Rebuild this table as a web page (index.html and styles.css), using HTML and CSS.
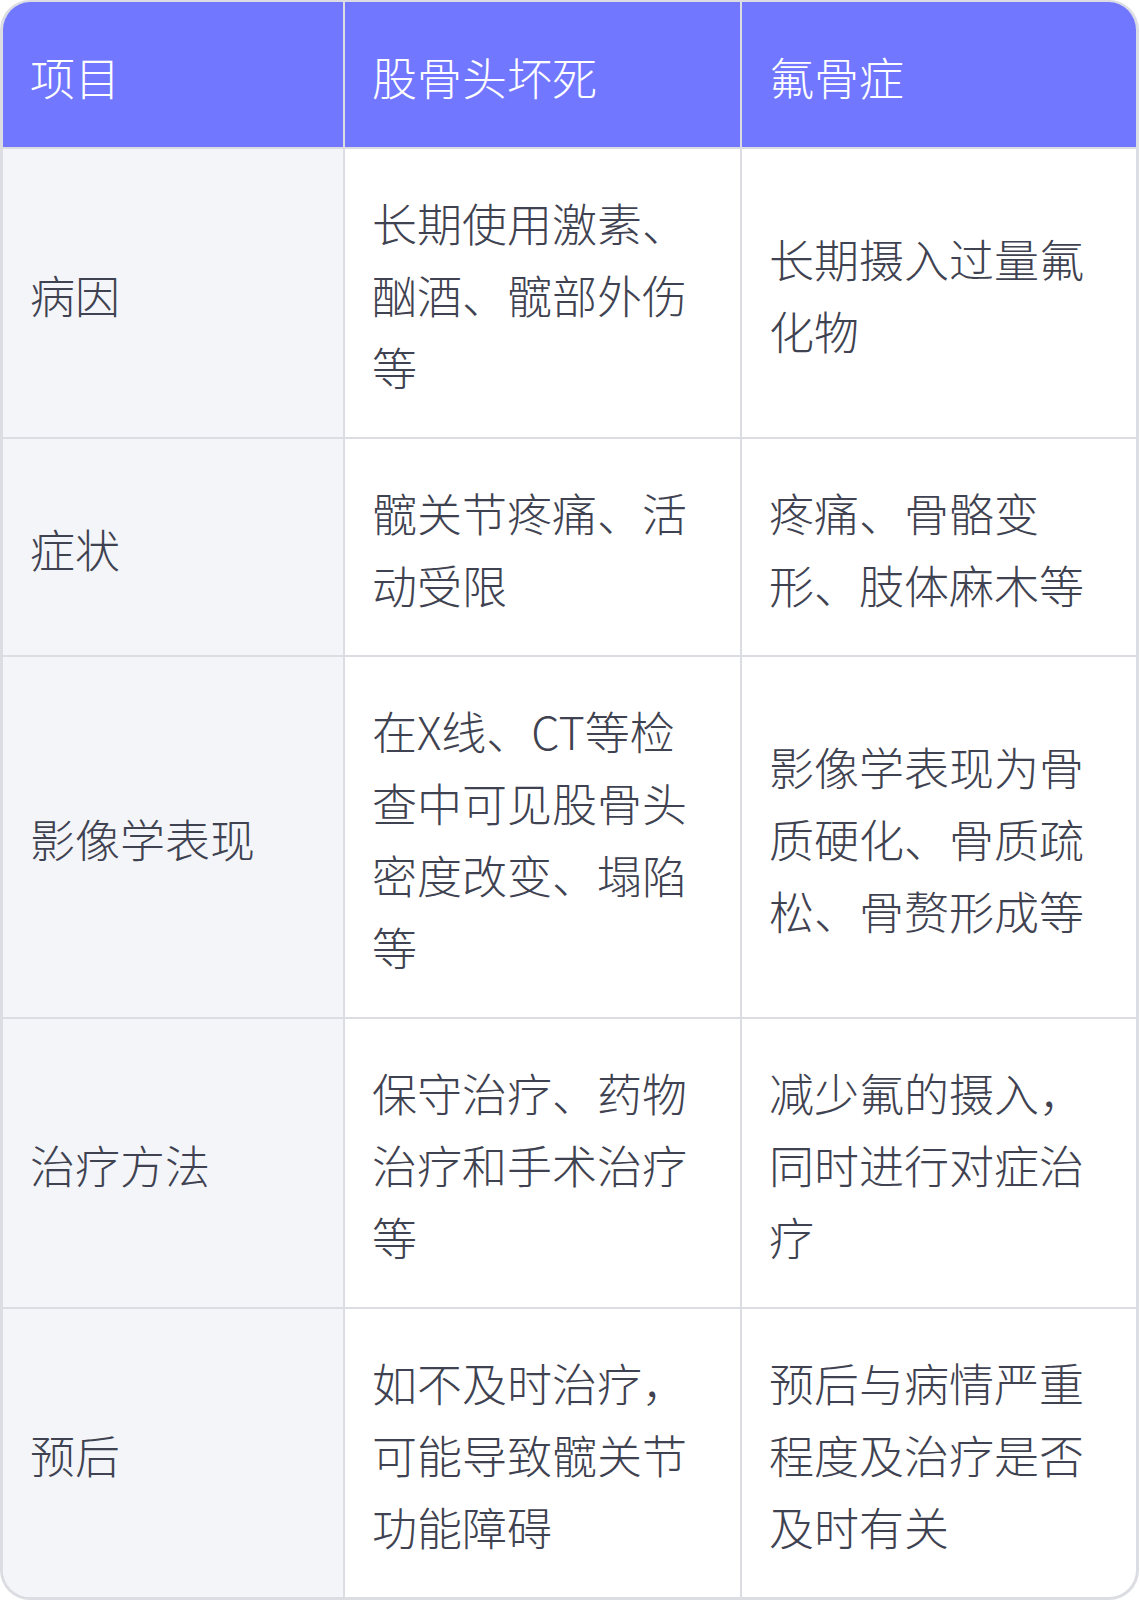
FILE: index.html
```html
<!DOCTYPE html>
<html lang="zh">
<head>
<meta charset="utf-8">
<link rel="stylesheet" href="styles.css">
</head>
<body>
<div class="card">
<table class="cmp">
<colgroup><col class="c1"><col class="c2"><col class="c3"></colgroup>
<thead>
<tr><th>项目</th><th>股骨头坏死</th><th>氟骨症</th></tr>
</thead>
<tbody>
<tr><td>病因</td><td>长期使用激素、酗酒、髋部外伤等</td><td>长期摄入过量氟化物</td></tr>
<tr><td>症状</td><td>髋关节疼痛、活动受限</td><td>疼痛、骨骼变形、肢体麻木等</td></tr>
<tr><td>影像学表现</td><td>在X线、CT等检查中可见股骨头密度改变、塌陷等</td><td>影像学表现为骨质硬化、骨质疏松、骨赘形成等</td></tr>
<tr><td>治疗方法</td><td>保守治疗、药物治疗和手术治疗等</td><td>减少氟的摄入，同时进行对症治疗</td></tr>
<tr><td>预后</td><td>如不及时治疗，可能导致髋关节功能障碍</td><td>预后与病情严重程度及治疗是否及时有关</td></tr>
</tbody>
</table>
</div>
</body>
</html>
```
FILE: styles.css
```css
html, body {
  margin: 0;
  padding: 0;
  background: #ffffff;
}
.card {
  box-sizing: border-box;
  width: 1139px;
  border: 3px solid #dcdde2;
  border-top-width: 2px;
  border-radius: 30px;
  overflow: hidden;
  background: #ffffff;
}
.cmp {
  width: 100%;
  table-layout: fixed;
  border-collapse: separate;
  border-spacing: 0;
  font-family: "Noto Sans CJK SC", "Noto Sans", sans-serif;
  font-size: 45px;
  font-weight: 300;
  line-height: 72px;
  color: #3f4250;
}
.c1 { width: 342px; }
.c2 { width: 397px; }
.c3 { width: 394px; }
.cmp th, .cmp td {
  padding: 38px 27px 34px;
  text-align: left;
  vertical-align: middle;
  border-right: 2px solid #dcdde2;
  border-bottom: 2px solid #dcdde2;
  font-weight: 300;
  word-break: break-all;
}
.cmp th:last-child, .cmp td:last-child {
  border-right: none;
}
.cmp tbody tr:last-child td {
  border-bottom: none;
}
.cmp th {
  background: #7177ff;
  color: #ffffff;
  padding-top: 39px;
  padding-bottom: 34px;
}
.cmp td:first-child {
  background: #f4f5f9;
}
```
